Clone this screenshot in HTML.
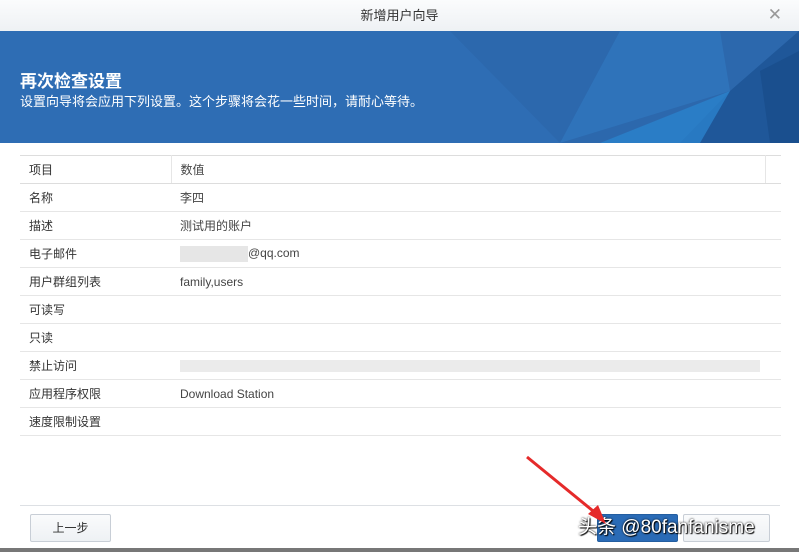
<!DOCTYPE html>
<html><head><meta charset="utf-8"><style>
*{margin:0;padding:0;box-sizing:border-box}
body{width:799px;height:552px;overflow:hidden;background:#fff;font-family:"Liberation Sans","Noto Sans CJK SC",sans-serif;position:relative}
.title{position:absolute;left:0;top:0;width:799px;height:31px;background:linear-gradient(#fbfcfd,#eef1f4);text-align:center;font-size:13px;line-height:31px;color:#333}
.x{position:absolute;right:17px;top:0;font-size:17px;color:#999;line-height:29px}
.banner{position:absolute;left:0;top:31px;width:799px;height:112px;background:#2e6db4;overflow:hidden}
.banner h1{position:absolute;left:20px;top:36px;font-size:17px;color:#fff;font-weight:bold}
.banner p{position:absolute;left:20px;top:60px;font-size:13px;color:#fff}
table{position:absolute;left:20px;top:155px;width:761px;border-collapse:collapse;font-size:12px;color:#333;border-top:1px solid #ddd}
td{height:28px;border-bottom:1px solid #e6e6e6;padding-left:9px}
td.v{color:#444}
.k{width:151px}
tr.h td{border-bottom:1px solid #ddd}
.btn{position:absolute;top:514px;height:28px;border:1px solid #c8ced6;border-radius:2px;background:linear-gradient(#fafbfc,#eef1f4);font-size:12px;text-align:center;line-height:26px;color:#333}
.blur{display:inline-block;background:#e6e6e6;height:16px;vertical-align:middle}
</style></head><body>
<div class="title">新增用户向导<span class="x">✕</span></div>
<div class="banner">
<svg width="799" height="112" style="position:absolute;left:0;top:0">
<polygon points="450,0 799,0 799,112 560,112" fill="#2c68ad"/>
<polygon points="620,0 720,0 730,60 560,112" fill="#3077bf" opacity=".7"/>
<polygon points="730,60 799,0 799,112 680,112" fill="#1f5799"/>
<polygon points="600,112 730,60 700,112" fill="#2a82cc" opacity=".8"/>
<polygon points="760,40 799,20 799,112 770,112" fill="#1a4f8e"/>
</svg>
<h1>再次检查设置</h1>
<p>设置向导将会应用下列设置。这个步骤将会花一些时间，请耐心等待。</p>
</div>
<table>
<tr class="h"><td class="k" style="border-right:1px solid #e6e6e6">项目</td><td class="v" style="border-right:1px solid #e6e6e6">数值</td><td style="width:16px;padding:0"></td></tr>
<tr><td>名称</td><td class="v" colspan="2">李四</td></tr>
<tr><td>描述</td><td class="v" colspan="2">测试用的账户</td></tr>
<tr><td>电子邮件</td><td class="v" colspan="2"><span class="blur" style="width:68px"></span>@qq.com</td></tr>
<tr><td>用户群组列表</td><td class="v" colspan="2">family,users</td></tr>
<tr><td>可读写</td><td colspan="2"></td></tr>
<tr><td>只读</td><td colspan="2"></td></tr>
<tr><td>禁止访问</td><td colspan="2"><span class="blur" style="width:580px;height:12px;background:#ebebeb"></span></td></tr>
<tr><td>应用程序权限</td><td class="v" colspan="2">Download Station</td></tr>
<tr><td>速度限制设置</td><td colspan="2"></td></tr>
</table>
<div style="position:absolute;left:20px;top:505px;width:760px;height:1px;background:#dde0e4"></div>
<div class="btn" style="left:30px;width:81px">上一步</div>
<div class="btn" style="left:597px;width:81px;background:#2a6bb6;border-color:#245ea0;color:#fff"></div>
<div class="btn" style="left:683px;width:87px"></div>
<div style="position:absolute;left:578px;top:512px;font-size:19px;color:#fff;text-shadow:0 0 2px #000,1px 1px 1px #000;white-space:nowrap">头条 @80fanfanisme</div>
<svg width="799" height="552" style="position:absolute;left:0;top:0">
<line x1="527" y1="457" x2="598" y2="515" stroke="#e52a2a" stroke-width="3"/>
<polygon points="606,524 588,514 598,505" fill="#e52a2a"/>
</svg>
<div style="position:absolute;left:0;top:548px;width:799px;height:4px;background:#777"></div>
</body></html>
